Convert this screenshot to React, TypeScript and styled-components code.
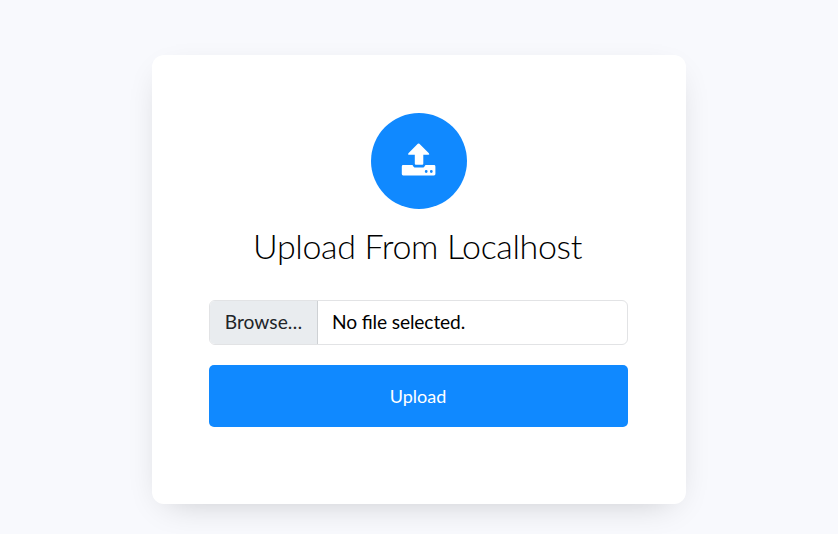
import React from "react";
import styled, { createGlobalStyle } from "styled-components";

const Global = createGlobalStyle`
  *{box-sizing:border-box}
  body{margin:0;background:#f8f9fd;font-family:Lato,sans-serif;overflow:hidden}
`;
const Page = styled.main`display:flex;justify-content:center;padding-top:55px;height:534px;`;
const Card = styled.section`
  width:534px;height:449px;background:#fff;border-radius:12px;padding:58px 58px 0 57px;
  display:flex;flex-direction:column;align-items:center;
  box-shadow:0 10px 34px -15px rgba(0,0,0,.24);
`;
const Badge = styled.div`
  width:96px;height:96px;border-radius:50%;background:#1089ff;color:#fff;
  display:flex;align-items:center;justify-content:center;
`;
const Title = styled.h1`
  margin:14px 0 0;padding-right:2px;font-size:34px;font-weight:300;line-height:46px;color:#000;
  white-space:nowrap;letter-spacing:-.36px;
`;
const FileField = styled.div`
  align-self:stretch;margin-top:31px;height:45px;display:flex;border:1px solid #e2e3e5;border-radius:6px;overflow:hidden;
  font-size:19.2px;line-height:42px;color:#000;
`;
const Browse = styled.span`
  width:108px;background:#e9ecef;color:#212529;border-right:1px solid #ced1d4;text-align:center;
`;
const FileName = styled.span`padding-left:14px;letter-spacing:-.13px;font-feature-settings:"liga" 1;`;
const Submit = styled.button`
  align-self:stretch;margin-top:20px;padding:0 1px 0 0;height:62px;border:0;border-radius:5px;
  background:#1089ff;color:#fff;font:400 18px Lato,sans-serif;
`;

function UploadIcon() {
  return (
    <svg width="36" height="36" viewBox="0 0 36 36" fill="currentColor" aria-hidden="true">
      <path d="M16.8.8Q17.6 0 18.4.8L27.9 10.3Q29 11.8 27.3 11.8H22.3V20.7Q22.3 21.8 21.2 21.8H14.9Q13.8 21.8 13.8 20.7V11.8H7.9Q6.4 11.8 7.4 10.3Z" />
      <path
        fillRule="evenodd"
        d="M2.1 22H11.3C12 22 12.2 24.6 14.3 24.6H21.6C23.7 24.6 23.9 22 24.7 22H33Q34.4 22 34.4 23.4V31.1Q34.4 32.5 33 32.5H2.1Q.8 32.5.8 31.1V23.4Q.8 22 2.1 22ZM25.2 27.1A1.4 1.4 0 1 0 25.2 29.9A1.4 1.4 0 1 0 25.2 27.1ZM30.3 27.1A1.4 1.4 0 1 0 30.3 29.9A1.4 1.4 0 1 0 30.3 27.1Z"
      />
    </svg>
  );
}

export default function App() {
  return (
    <Page>
      <Global />
      <Card>
        <Badge><UploadIcon /></Badge>
        <Title>Upload From Localhost</Title>
        <FileField><Browse>Browse…</Browse><FileName>No file selected.</FileName></FileField>
        <Submit>Upload</Submit>
      </Card>
    </Page>
  );
}
